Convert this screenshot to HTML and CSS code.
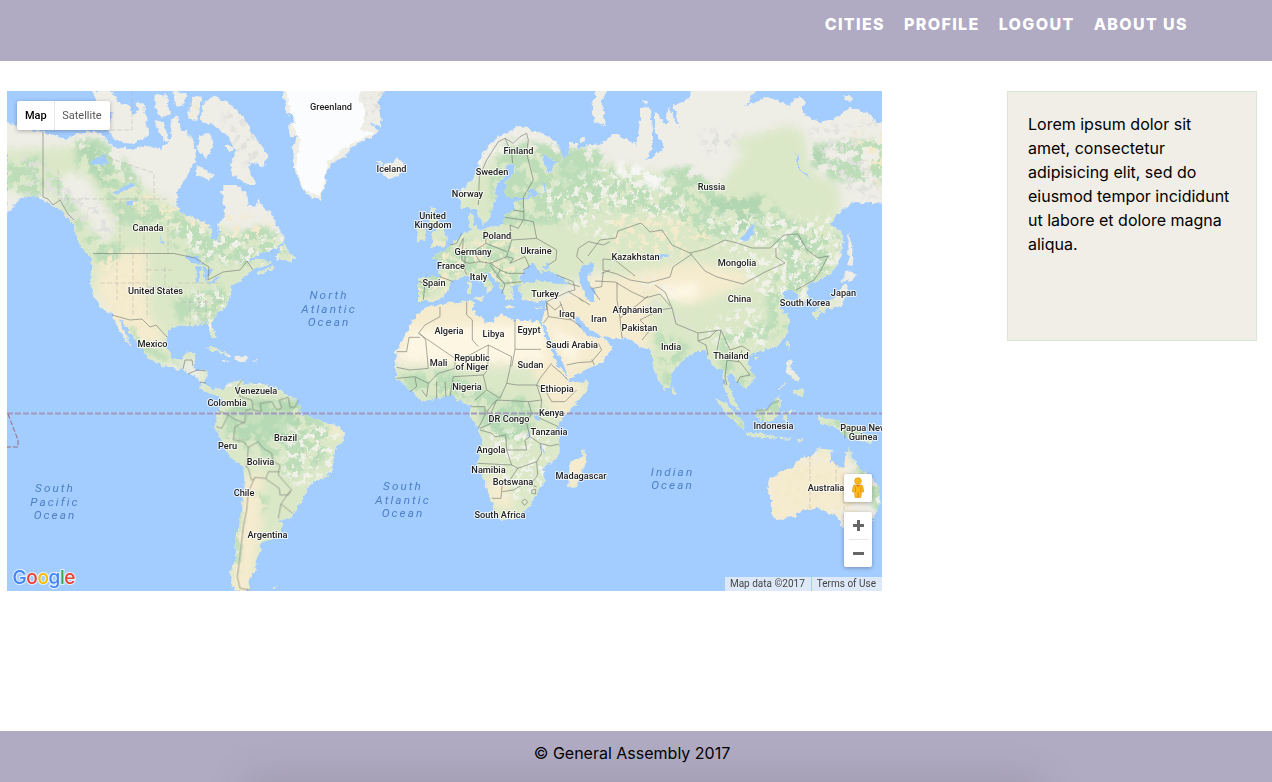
FILE: index.html
```html
<!DOCTYPE html>
<html lang="en">
<head>
<meta charset="utf-8">
<title>Cities</title>
<link rel="stylesheet" href="styles.css">
</head>
<body>
<header class="site-header">
  <nav class="nav"><a>CITIES</a><a>PROFILE</a><a>LOGOUT</a><a>ABOUT US</a></nav>
</header>
<main class="content">
  <section class="map">
    <svg class="world" viewBox="7 91 875 500" width="875" height="500">
      <defs>
        <path id="namerica" d="M7 123L23 128 43 132 57 136 67 139 72 136 82 132 97 132 110 143 115 147 133 149 147 146 160 149 172 138 170 118 177 115 182 132 190 145 197 155 190 172 184 181 177 192 175 203 182 213 197 219 210 225 212 238 218 242 220 232 218 225 225 215 222 192 223 185 237 185 245 193 248 205 255 207 258 198 263 208 271 213 277 225 285 238 278 247 257 255 245 262 253 260 263 259 273 263 257 267 243 277 233 285 230 295 227 305 213 317 212 323 216 337 212 337 207 323 197 325 185 326 173 327 167 332 165 343 172 358 182 360 187 353 197 352 194 363 193 368 207 372 205 383 213 392 223 390 226 394 217 396 208 391 203 387 197 377 182 370 167 367 147 358 143 350 133 337 123 323 118 318 125 332 132 347 127 343 117 327 112 315 100 307 95 297 90 283 92 260 80 245 76 234 72 222 58 208 47 202 33 195 20 198 14 205 7 213Z"/>
        <path id="arctic" transform="translate(0 85) scale(.33333)" d="M275 18L340 18 350 50 385 60 400 90 425 70 440 110 445 150 400 178 345 168 320 130 340 90 310 70 290 50ZM410 50L432 60 440 105 420 110ZM460 30L500 28 510 90 480 100 470 70ZM520 20L560 25 550 60 525 62ZM575 35L608 38 590 105 565 100ZM515 95L540 105 540 130 515 130ZM460 105L490 110 510 170 490 165ZM540 130L570 150 590 200 560 200ZM612 50L640 35 680 50 730 95 755 140 805 210 790 245 755 230 745 245 770 300 745 300 700 270 690 235 710 195 680 150 640 120 600 110ZM600 150L630 145 640 180 620 225 590 190ZM590 240L645 270 630 285 590 270ZM675 180L705 185 685 205ZM850 18L900 18 900 200 875 190 895 150 865 140 865 120 890 110 865 50Z"/>
        <path id="islands" transform="translate(0 240) scale(.33333)" d="M825 55L855 5 860 30 882 50 878 68 850 60ZM770 98L820 80 825 85 775 105ZM612 325L640 320 690 345 690 350 650 332ZM703 350L740 350 743 362 705 362ZM668 360L690 364 688 368 670 365ZM760 360h12v4h-12Z"/>
        <path id="samerica" transform="translate(180 360) scale(.33333)" d="M115 100L130 90 150 70 185 58 190 75 240 70 290 85 330 110 355 125 365 165 410 175 430 190 470 195 495 220 490 240 465 270 455 330 440 350 400 365 380 385 370 415 340 460 330 478 295 478 310 500 295 530 240 550 245 570 225 600 230 630 205 660 210 692 165 692 150 640 170 590 165 540 185 450 195 370 190 320 150 290 130 250 105 205 105 180 115 155 130 130ZM275 680L295 678 285 687ZM60 75L90 90 120 82 128 100 118 100 100 92 75 95 55 80Z"/>
        <path id="greenland" transform="translate(270 85) scale(.33333)" d="M38 10L350 10 325 45 335 125 300 115 325 138 300 160 245 185 225 215 185 235 170 260 165 300 150 345 105 325 88 285 70 240 65 185 88 170 85 150 60 155 55 125 85 125 65 90 50 85Z"/>
        <path id="iceland" transform="translate(270 85) scale(.33333)" d="M318 225L330 228 335 240 385 222 405 245 400 262 360 282 335 270 345 260 320 255 335 245Z"/>
        <path id="africa" transform="translate(385 290) scale(.33333)" d="M100 70L125 50 190 40 255 30 270 35 262 60 280 80 320 105 330 80 350 75 385 90 430 90 465 100 478 130 500 180 520 230 550 265 555 280 612 270 605 300 570 345 530 385 515 415 525 470 520 500 475 535 480 575 455 600 440 645 400 685 345 690 320 640 300 580 278 520 290 450 280 415 255 380 258 345 225 335 200 315 160 325 110 332 65 290 35 265 32 240 32 185 65 125ZM598 478L606 508 590 550 570 595 550 590 555 515 590 500Z"/>
        <path id="eurasia" d="M418 300L418 277 440 277 440 262 432 257 443 252 453 243 465 233 473 230 468 223 470 213 474 215 472 225 480 230 503 225 505 213 515 210 514 202 530 198 536 193 520 198 506 198 505 183 514 173 514 163 507 165 504 177 497 184 495 200 490 217 483 225 476 208 470 208 462 208 458 193 473 180 480 160 490 143 505 133 523 125 533 131 550 137 560 147 562 157 557 162 542 153 543 163 550 173 557 160 570 155 568 143 577 143 578 150 590 144 600 145 615 133 637 145 640 120 640 108 650 106 652 132 652 148 645 160 653 157 665 148 655 132 655 112 667 125 668 107 680 128 673 105 690 99 691 85 762 85 745 106 767 97 790 105 797 97 803 98 803 113 820 123 840 117 843 112 850 107 867 112 878 123 890 121 890 204 853 202 837 215 830 225 842 232 843 248 838 263 830 275 827 275 818 281 807 285 808 297 803 307 798 303 797 292 787 290 780 295 792 301 780 307 790 320 787 333 777 347 757 352 748 357 747 363 755 377 753 383 743 388 740 383 730 373 727 377 732 395 740 410 733 407 725 390 723 370 713 367 705 350 697 350 680 363 672 373 670 387 664 390 653 367 652 350 640 347 633 340 620 338 603 337 590 330 578 316 573 319 585 333 593 338 602 337 613 348 602 362 568 378 565 367 552 343 545 327 542 322 545 310 547 300 540 302 523 300 519 290 520 284 512 287 514 300 506 300 503 290 490 273 483 270 493 287 487 293 486 286 473 277 468 275 453 280 443 297 433 302Z"/>
        <path id="europeisles" transform="translate(390 110) scale(.33333)" d="M125 292L138 295 130 315 160 350 162 375 175 385 165 408 118 410 130 392 122 375 138 360 115 330ZM88 350L108 355 105 390 78 395 80 365ZM235 520h9v28h-9ZM250 565L280 560 275 575ZM440 590l15 0 0 4-15 0ZM350 588l25 2-1 5-24-2ZM605 5L625 0 630 20 650 45 615 38ZM572 82h12v12h-12ZM538 100L552 97 555 115 545 140ZM250 350l15-5 3 12-14 5Z"/>
        <path id="novaya" transform="translate(590 85) scale(.33333)" d="M20 10L55 10 35 50 48 122 10 95 5 65ZM158 45L175 50 165 57ZM610 38L640 35 645 60 620 62ZM760 30L785 35 785 50 765 48ZM775 440L790 500 785 545 775 540ZM765 560L800 575 760 590Z"/>
        <path id="asiaisles" transform="translate(590 240) scale(.33333)" d="M770 90L805 105 785 120 755 125ZM765 130L775 145 760 185 750 200 700 210 675 215 705 190 735 175ZM670 220L690 215 680 240ZM690 212l18-2-10 12ZM590 303L600 308 595 328 585 315ZM490 348l17 0-8 15ZM245 440L260 460 250 470ZM588 360L603 362 605 390 630 410 625 430 590 400ZM610 450L640 445 635 470 610 460ZM565 445l20-16 2 3-19 17Z"/>
        <path id="oceania" transform="translate(680 380) scale(.33333)" d="M262 300L285 285 340 260 375 225 390 235 410 205 455 210 450 240 475 260 490 265 505 200 515 225 535 260 570 290 600 330 598 380 580 415 570 440 500 455 485 440 465 400 450 405 420 385 370 390 340 410 290 420 278 410 275 370 262 320ZM105 55L135 70 190 125 192 150 150 115 125 85ZM195 155L250 163 290 172 285 178 200 165ZM225 95L265 85 298 45 302 65 290 110 265 127 230 115ZM310 95L355 92 322 102 320 130 312 125ZM410 108L440 115 470 120 520 140 560 165 575 190 500 172 470 142 425 130ZM350 180l22-6-16 14ZM300 172l36 3-2 4-34-3Z"/>
        <clipPath id="land">
          <use href="#namerica"/><use href="#arctic"/><use href="#islands"/><use href="#samerica"/><use href="#greenland"/><use href="#iceland"/><use href="#africa"/><use href="#eurasia"/><use href="#europeisles"/><use href="#novaya"/><use href="#asiaisles"/><use href="#oceania"/>
        </clipPath>
        <filter id="rough" x="0" y="80" width="890" height="520" filterUnits="userSpaceOnUse" color-interpolation-filters="sRGB">
          <feTurbulence type="fractalNoise" baseFrequency=".2" numOctaves="3" seed="4"/>
          <feDisplacementMap in="SourceGraphic" scale="6" xChannelSelector="R" yChannelSelector="G"/>
        </filter>
        <filter id="forest" x="0" y="80" width="890" height="520" filterUnits="userSpaceOnUse" color-interpolation-filters="sRGB">
          <feGaussianBlur in="SourceGraphic" stdDeviation="2.500" result="s"/>
          <feTurbulence type="fractalNoise" baseFrequency=".08" numOctaves="5" seed="8"/>
          <feColorMatrix values="0 0 0 0 0  0 0 0 0 0  0 0 0 0 0  12 0 0 0 -5"/>
          <feComposite in="s" operator="in"/>
        </filter>
        <filter id="speck" x="0" y="80" width="890" height="520" filterUnits="userSpaceOnUse" color-interpolation-filters="sRGB">
          <feGaussianBlur in="SourceGraphic" stdDeviation="3" result="s"/>
          <feTurbulence type="fractalNoise" baseFrequency=".15" numOctaves="4" seed="21"/>
          <feColorMatrix values="0 0 0 0 0  0 0 0 0 0  0 0 0 0 0  0 12 0 0 -6.5"/>
          <feComposite in="s" operator="in"/>
        </filter>
        <filter id="soft" x="0" y="80" width="890" height="520" filterUnits="userSpaceOnUse"><feGaussianBlur stdDeviation="4"/></filter>
      </defs>
      <rect class="sea" x="7" y="91" width="875" height="500"/>
      <g filter="url(#rough)">
        <g clip-path="url(#land)">
          <rect class="tundra" x="0" y="80" width="890" height="520"/>
          <g filter="url(#soft)">
            <path class="meadow" d="M0 150L100 145 120 175 165 200 200 225 300 240 290 280 235 350 150 370 70 260 50 195 0 190ZM200 370H350V600H200ZM400 210L455 200 480 170 510 140 560 160 620 165 700 180 735 140 790 125 805 135 810 170 840 185 840 300 780 370 720 430 640 390 640 330 600 270 520 310H400ZM380 366H600V540H380ZM690 380H890V450H690Z"/>
            <path class="sand" d="M100 258L145 250 148 315 165 335 155 352 120 330 97 290ZM240 480L262 470 262 520 250 595 232 595ZM322 424L348 428 340 440ZM398 300L560 300 616 330 616 362 568 380 590 385 565 420 550 410 530 365 398 365ZM560 300L590 278 625 275 650 270 690 262 740 270 755 280 690 305 650 295 650 350 600 340ZM485 480L505 475 515 510 490 505ZM560 455l30 0 0 20-25 20ZM770 465L845 455 850 510 800 515 765 530Z"/>
            <path class="bright" d="M410 330L480 325 545 322 545 362 400 362ZM548 325L585 345 570 365ZM660 285L700 282 695 300 665 300Z"/>
            <path class="tundra" d="M60 175L85 175 115 225 105 245 85 215 55 195ZM845 120H885V200H845L830 170ZM560 130H700L745 150 720 185 690 180 670 155 600 158Z"/>
          </g>
          <g filter="url(#forest)">
            <path class="wood" d="M0 165L40 155 45 200 10 190ZM75 140L100 138 135 170 145 200 185 215 210 235 230 235 262 225 290 240 285 255 250 265 205 263 170 245 170 225 120 225 95 175 75 165ZM40 160L60 180 90 235 125 245 105 275 90 250ZM172 300L220 285 235 298 210 325 178 322ZM125 320L160 352 195 375 180 368 140 350ZM227 410L245 400 300 400 330 430 325 460 290 480 275 460 225 440ZM238 480L242 500 240 570 232 570ZM255 490L270 500 262 515ZM490 170L510 140 600 150 620 180 690 165 720 195 770 200 790 220 820 230 845 235 830 270 800 290 790 325 760 345 730 340 735 380 755 370 755 395 720 370 720 335 770 320 765 300 785 250 750 235 700 240 670 215 600 210 560 225 500 225 490 210ZM810 145L850 140 885 140 885 185 830 180ZM440 240L510 240 520 290 500 290 460 270 420 300 420 275ZM470 385L500 395 530 398 535 425 520 445 485 435ZM400 375L450 370 480 390 470 400 410 395ZM655 330L690 345 665 395ZM755 400L785 395 780 430 755 420ZM715 395L750 430 740 430ZM820 415L885 425V450H845ZM848 450L885 480 885 530 865 490Z"/>
            <path class="deep" d="M227 412L245 400 290 402 305 430 290 440 245 440ZM495 402L530 402 533 425 520 440 490 430ZM75 145L95 145 115 180 100 185ZM705 198L765 195 760 215 740 235ZM810 150L825 145 825 165 812 168ZM785 235L805 235 815 260 790 250Z"/>
          </g>
          <path class="basin" d="M232 412L245 402 285 405 300 428 280 438 245 436ZM498 404L528 404 530 425 518 436 495 428ZM555 160L600 165 615 185 590 195 560 185Z" filter="url(#soft)"/>
          <g filter="url(#speck)">
            <path class="snow" d="M70 170L120 230 100 240 60 190ZM290 425L345 425 335 470 300 490 280 470ZM540 190L620 160 680 190 690 230 600 240 550 220ZM220 370H290V390H220ZM700 215H840V300H760ZM640 270L680 290 650 310ZM690 330L760 300 770 350 720 345ZM480 125L540 130 480 170 460 210ZM150 200L290 225 280 270 200 260ZM190 290H240V330H190ZM485 430H550V500H500Z"/>
            <path class="hill" d="M20 150L120 220 110 240 30 200ZM225 95L270 150 260 185 225 130ZM700 130L735 130 735 150 705 155ZM810 130L885 120V200L840 190ZM640 285L700 335 650 310ZM366 90L390 90 384 130 362 115Z"/>
            <path class="sandspeck" d="M110 185L280 225 250 240 140 215ZM190 100L200 100 200 120 188 120ZM100 250H150V330H110ZM610 215L700 220 720 250 610 265ZM850 130H885V200ZM400 240L520 240 520 290 400 300ZM775 440H860V520H775Z"/>
          </g>
          <path class="ice" d="M284 80L362 80 358 100 366 111 360 130 375 133 345 147 328 162 321 195 306 192 296 168 300 140 293 125Z"/>
          <path class="frost" d="M617 160L640 166 668 178 655 192 638 178 617 175Z" filter="url(#forest)"/>
        </g>
        <g class="lakes" transform="translate(390 110) scale(.33333)">
          <path d="M390 505L408 475 430 458 452 488 480 478 500 495 540 518 500 522 445 512 400 522ZM455 470L478 460 470 478ZM565 490L585 462 612 460 608 482 592 500 603 530 613 535 612 575 590 570 575 530ZM413 245L425 233 443 250 435 263ZM453 215L466 220 468 250Z"/>
        </g>
        <g class="lakes">
          <path d="M90 162L105 154 108 164 95 165ZM113 193L132 182 135 186 118 194ZM127 202L138 201 128 206ZM183 256L197 257 205 265 192 263ZM195 282L196 265 201 269 198 283ZM201 266L212 270 207 282ZM207 283L220 275 218 280 208 285ZM158 233L165 245 162 243ZM740 240L755 222 753 235 745 242ZM534 415h6v6h-5ZM527 428l4 13-3-6ZM541 442l4 12-3-3ZM796 150l4 18 12 12-14-11ZM652 257L662 254 670 255 658 259ZM240 370l2 0 0 8-2-3Z"/>
        </g>
      </g>
      <g class="borders">
        <path d="M43 132V197L48 199 53 205 60 200 68 214 74 220M93 253.500H174L195 258 209 267 208 280 223 272 240 270 247 261 253 270M112 315L130 320 142 319 150 327 156 325 167 337M183 369L185 360 192 360 193 366M188 374L197 370 206 371M200 382L206 383"/>
        <path transform="translate(180 360) scale(.33333)" d="M185 60L172 80 180 110 215 120 220 150 245 155 240 130 275 125 290 150 305 145 298 120 325 112 330 142 345 142 355 120M215 148L198 150 195 185 165 200 160 240 190 245 205 262 235 245 250 265 275 280 280 305 300 315 295 345 335 390 325 405 300 405 298 385 255 355 225 352 215 362 205 325 195 318M115 152L145 165 165 178 195 190M145 165L125 205 108 200M205 262L200 320M258 355L265 335 298 335M330 392L303 432 338 460M303 432L295 475M225 352L205 395 200 450 190 500 180 590 172 650 180 685 210 690"/>
        <path transform="translate(385 290) scale(.33333)" d="M165 50L165 80 120 105 100 130 210 205 245 200 310 165 380 200 375 235 365 280 395 285 455 285 465 265 500 220M245 35L245 75 262 90 262 150 280 170M390 90V178H468M390 178L380 230M122 150L130 235 75 240 35 232M122 150L105 130M65 185L72 142 105 142M35 185H65M210 205L210 235 160 250 130 280 90 260 35 265M310 165L308 240 295 255 205 260 195 318M295 255L305 300 345 325 365 280M305 300L270 330M258 350H300V375L280 415M300 375L320 345 335 330 430 335 470 330 455 285 480 300 500 335 540 335 575 300M90 262L95 290 75 305M130 280L125 320 110 300M155 275L155 325M180 275L183 320M430 335L440 370 425 400 435 440 465 460 495 468 523 462M335 330L320 365 318 400 285 415M285 420L320 430 330 440 362 435 365 480 380 525 278 520M365 480L425 480 420 450 435 440M380 525L398 535 375 570 352 580 350 600 348 625 320 625M398 535L455 515 470 490 465 460M352 605L385 600 420 580 455 590M455 515L458 555 440 580M410 635L420 627 428 637 418 646ZM440 600L452 598 452 612 440 610ZM440 370L475 370M470 330L465 385 520 410M475 100L490 80 560 90 588 110M490 80L485 40M525 35L540 75 562 90M545 225L580 218 620 215 650 180 640 160M500 225L530 250 548 270M620 208L628 225"/>
        <path transform="translate(390 110) scale(.33333)" d="M265 285L268 200 290 150 325 95 345 85 370 100 390 80 410 70 415 90 410 130 430 210 400 262 402 330 430 335 440 385 500 420 498 450 475 465M345 85L365 130 368 160M370 300L400 305M345 322L400 330M360 345L385 355 400 330M360 345L365 390 440 385M365 390L350 440 370 445 360 460 405 440 418 470 400 480M285 360L288 400 250 425 270 455 235 460 215 450 220 385M288 400L350 425M270 455L300 460 350 440M300 460L330 480 355 490 405 490M330 480L320 500 345 520 395 515M300 465L345 525 335 550M215 370L200 400 180 405M220 385L205 415 225 440 225 485 232 495M88 515L105 520 100 570M150 500L190 515M500 495L550 515 555 540 535 545 470 575 470 600M535 545L560 560 580 575M565 415L595 395 640 405 660 395M565 415L560 440 580 460M635 490L660 480M535 520L570 530M610 535L635 530 640 485"/>
        <path d="M588 256L600 240 616 238 618 231 641 223 650 232 662 230 672 245 690 253 706 249 725 240 737 243 752 248 770 248 784 235 798 234 807 250 818 258 828 256 821 270 814 280 796 290M690 253L705 271 717 277 743 284 765 272 785 263 776 257 776 248M692 254L673 267 670 277 648 283 630 280 617 274 603 270 603 259 615 260 635 276M595 281L615 282 632 292 645 298 660 294 670 306M617 282L617 300 620 318 622 338M620 318L636 306 648 296M642 340L650 330 640 320 660 310 672 308 676 324 698 333 721 330 717 350M672 308L665 292 655 285M698 333L698 341 706 345 708 355M721 330L730 350 742 346 750 351M727 360L725 377 727 385M727 360L740 362 750 375 740 377 737 383M698 341L710 337 717 330M742 350L738 362M546 302L555 310 562 304M590 286L600 300M579 298L590 305"/>
        <path transform="translate(680 380) scale(.33333)" d="M228 92L260 90 275 70 298 62M495 130V175M135 15L132 0"/>
      </g>
      <path class="states" d="M58 170V199H168M132 91V130H95M154 200V173L100 155M120 199V253M144 200V253M168 220V253M100 283H145M117 254V300M133 254V316M147 254V318M147 270H172M147 287H178M165 267V285M178 283H220M182 302H225M198 290V324M190 300V325M206 300V322M810 455V512M836 462V490M844 492V530M290 430L310 460M225 438L250 440M320 440L315 470"/>
      <path class="equator" d="M7 413.500H882"/>
      <path class="dateline" d="M8 414L18 440V447H7"/>
      <g class="countries">
        <text x="331" y="110">Greenland</text><text x="391.500" y="172">Iceland</text><text x="518.500" y="154">Finland</text><text x="492" y="175">Sweden</text><text x="467.500" y="197">Norway</text><text x="711.500" y="190">Russia</text><text x="148" y="231">Canada</text><text x="432.500" y="219">United</text><text x="433" y="228">Kingdom</text><text x="497" y="239">Poland</text><text x="536" y="254">Ukraine</text><text x="473" y="255">Germany</text><text x="451" y="269">France</text><text x="478.500" y="280">Italy</text><text x="434" y="286">Spain</text><text x="545" y="297">Turkey</text><text x="635.500" y="260">Kazakhstan</text><text x="737" y="266">Mongolia</text><text x="739.500" y="302">China</text><text x="843.500" y="296">Japan</text><text x="805" y="306">South Korea</text><text x="155.500" y="294">United States</text><text x="152.500" y="347">Mexico</text><text x="449" y="334">Algeria</text><text x="493.500" y="337">Libya</text><text x="529" y="333">Egypt</text><text x="567" y="317">Iraq</text><text x="599" y="322">Iran</text><text x="637.500" y="313">Afghanistan</text><text x="639.500" y="331">Pakistan</text><text x="671" y="350">India</text><text x="731" y="359">Thailand</text><text x="572" y="348">Saudi Arabia</text><text x="438.500" y="366">Mali</text><text x="472" y="361">Republic</text><text x="472" y="370">of Niger</text><text x="530.500" y="368">Sudan</text><text x="467" y="390">Nigeria</text><text x="557" y="392">Ethiopia</text><text x="551.500" y="416">Kenya</text><text x="509" y="422">DR Congo</text><text x="549" y="435">Tanzania</text><text x="491" y="453">Angola</text><text x="488.500" y="473">Namibia</text><text x="513" y="485">Botswana</text><text x="581" y="479">Madagascar</text><text x="500" y="518">South Africa</text><text x="256" y="394">Venezuela</text><text x="227" y="406">Colombia</text><text x="285.500" y="441">Brazil</text><text x="227.500" y="449">Peru</text><text x="260.500" y="465">Bolivia</text><text x="244" y="496">Chile</text><text x="267.500" y="538">Argentina</text><text x="773.500" y="429">Indonesia</text><text x="863.500" y="431">Papua New</text><text x="863" y="439.500">Guinea</text><text x="826" y="491">Australia</text>
      </g>
      <g class="oceans">
        <text x="329" y="299">North</text><text x="329" y="313">Atlantic</text><text x="329" y="326">Ocean</text><text x="403" y="490">South</text><text x="403" y="504">Atlantic</text><text x="403" y="517">Ocean</text><text x="55" y="492">South</text><text x="55" y="506">Pacific</text><text x="55" y="519">Ocean</text><text x="672.500" y="476">Indian</text><text x="672.500" y="489">Ocean</text>
      </g>
      <text class="logo" x="12.500" y="583.500" textLength="63"><tspan class="g-blue">G</tspan><tspan class="g-red">o</tspan><tspan class="g-yellow">o</tspan><tspan class="g-blue">g</tspan><tspan class="g-green">l</tspan><tspan class="g-red">e</tspan></text>
    </svg>
    <div class="map-type"><b>Map</b><span>Satellite</span></div>
    <div class="controls">
      <div class="pegman"><svg width="14" height="22" viewBox="0 0 14 22"><circle cx="7" cy="4" r="3.300" class="peg"/><path class="peg" d="M3 8H11Q12.500 10 12.500 15H10.500L9.800 20.500H4.200L3.500 15H1.500Q1.500 10 3 8Z"/><path class="peg-shade" d="M4.500 8L7 10 9.500 8ZM6.700 15h.8v5.500h-.8ZM4 10h.7v5H4ZM9.500 10h.7v5h-.7Z"/></svg></div>
      <div class="zoom"><span class="plus"></span><i></i><span class="minus"></span></div>
    </div>
    <div class="attribution"><span>Map data ©2017</span><span>Terms of Use</span></div>
  </section>
  <aside class="card">Lorem ipsum dolor sit amet, consectetur adipisicing elit, sed do eiusmod tempor incididunt ut labore et dolore magna aliqua.</aside>
</main>
<footer class="site-footer">© General Assembly 2017</footer>
</body>
</html>
```
FILE: styles.css
```css
* { box-sizing: border-box; }
body { margin: 0; height: 782px; overflow: hidden; display: flex; flex-direction: column; background: #fff; color: #000; font: 16px/24px Inter, sans-serif; }
.site-header { flex: none; height: 61px; background: #b0aac2; display: flex; justify-content: flex-end; padding: 12px 84px 0 0; }
.nav { display: flex; gap: 19px; color: #fff; font-weight: 800; letter-spacing: 1.36px; }
.content { flex: 1; display: flex; justify-content: space-between; align-items: flex-start; padding: 30px 15px 0 7px; }
.map { position: relative; width: 875px; height: 500px; overflow: hidden; font-family: Roboto, sans-serif; }
.world { display: block; }
.sea, .lakes { fill: #a3ccff; }
.tundra { fill: #eeede6; }
.meadow { fill: #dbe8c8; }
.sand { fill: #f5ebcf; }
.bright { fill: #fdf6e3; }
.wood { fill: #bcddb8; }
.deep { fill: #b1d6b1; }
.basin { fill: #b9dcb7; opacity: .7; }
.snow { fill: #f0f1e8; }
.hill { fill: #e0e0dc; }
.sandspeck { fill: #f3eacb; }
.ice { fill: #fbfcfe; }
.frost { fill: #f6f6f4; }
.borders { fill: none; stroke: #6f746c; stroke-width: .7; opacity: .85; }
.borders path[transform] { stroke-width: 2.1; }
.states { fill: none; stroke: #b7b3ab; stroke-width: .7; stroke-dasharray: 5 2; opacity: .65; }
.equator { stroke: #a398bb; stroke-width: 1.8; stroke-dasharray: 6 2; }
.dateline { fill: none; stroke: #9a6878; stroke-width: 1; stroke-dasharray: 5 2; }
.countries { font-size: 9.2px; font-weight: 500; text-anchor: middle; fill: #222; stroke: #fff; stroke-opacity: .75; stroke-width: 2px; stroke-linejoin: round; paint-order: stroke; }
.oceans { font-size: 11.7px; font-style: italic; letter-spacing: 2.1px; text-anchor: middle; fill: #4c7fc4; }
.logo { font: 500 19px Inter, sans-serif; stroke: #fff; stroke-opacity: .7; stroke-width: 2px; paint-order: stroke; }
.g-blue { fill: #4285f4; }
.g-red { fill: #ea4335; }
.g-yellow { fill: #fbbc05; }
.g-green { fill: #34a853; }
.map-type { position: absolute; left: 10px; top: 10px; display: flex; height: 29px; background: #fff; border-radius: 2px; box-shadow: 0 1px 4px rgba(0,0,0,.3); font-size: 11px; line-height: 29px; }
.map-type b { font-weight: 500; padding: 0 7px 0 8px; }
.map-type span { color: #565656; padding: 0 8px 0 7.5px; border-left: 1px solid #e6e6e6; }
.controls { position: absolute; right: 10px; top: 383px; display: flex; flex-direction: column; gap: 10px; }
.pegman, .zoom { width: 28px; background: #fff; border-radius: 2px; box-shadow: 0 1px 4px rgba(0,0,0,.3); display: flex; align-items: center; justify-content: center; }
.pegman { height: 28px; }
.peg { fill: #fbb917; stroke: #dd9a18; stroke-width: .7; }
.peg-shade { fill: #e57c20; }
.zoom { height: 55px; flex-direction: column; }
.zoom i { width: 19px; height: 1px; background: #e6e6e6; }
.plus, .minus { width: 11px; height: 27px; background: linear-gradient(#666, #666) center / 11px 3px no-repeat; }
.plus { background: linear-gradient(#666, #666) center / 11px 3px no-repeat, linear-gradient(#666, #666) center / 3px 11px no-repeat; }
.attribution { position: absolute; right: 0; bottom: 0; display: flex; gap: 1px; height: 14px; font-size: 10px; line-height: 14px; color: #444; }
.attribution span { background: rgba(245,245,245,.7); padding: 0 6px 0 5px; white-space: nowrap; }
.card { width: 250px; height: 250px; background: #f1eee8; border: 1px solid #dbe7d6; padding: 20px; }
.site-footer { flex: none; height: 51px; padding: 10px 8px 0 0; text-align: center; overflow: hidden; position: relative; background: #b0aac2; }
.site-footer::after { content: ""; position: absolute; left: 250px; right: 235px; bottom: -22px; height: 20px; border-radius: 6px; box-shadow: 0 0 36px 4px rgba(105,95,105,.26); }
```
